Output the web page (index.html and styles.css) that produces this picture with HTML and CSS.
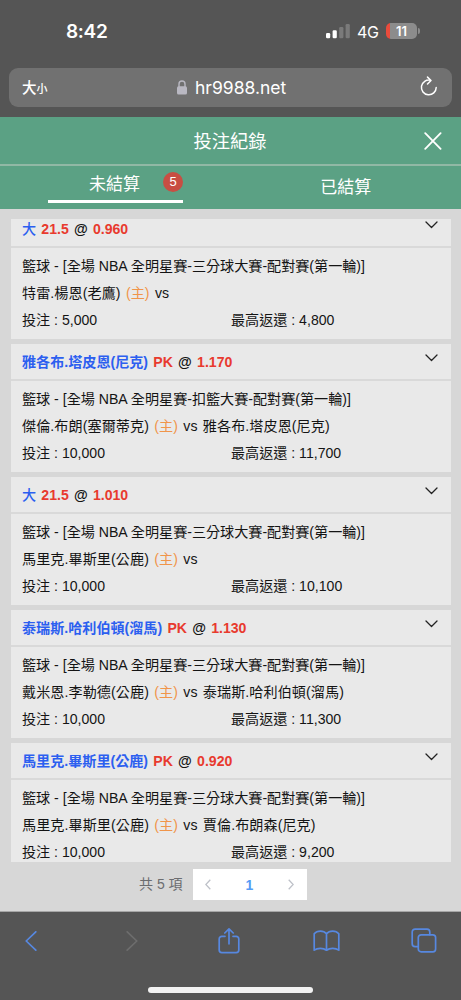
FILE: index.html
```html
<!DOCTYPE html>
<html lang="zh-Hant">
<head>
<meta charset="utf-8">
<title>投注紀錄</title>
<link rel="stylesheet" href="styles.css">
</head>
<body>
<div class="phone">
  <div class="status">
    <span class="time">8:42</span>
    <svg class="signal" width="24" height="16" viewBox="0 0 24 16"><rect x="0" y="10" width="4.2" height="5.3" rx="1.2" fill="#fff"/><rect x="6.6" y="7.3" width="4.2" height="8" rx="1.2" fill="#fff"/><rect x="13.2" y="4" width="4.2" height="11.3" rx="1.2" fill="#7a7a7a"/><rect x="19.6" y="1" width="4.2" height="14.3" rx="1.2" fill="#7a7a7a"/></svg>
    <span class="network">4G</span>
    <span class="battery">11</span><span class="battery-tip"></span>
  </div>
  <div class="address">
    <span class="text-size">大<small>小</small></span>
    <svg class="lock" width="10" height="15" viewBox="0 0 10 15"><path d="M2 7V4a3 3 0 0 1 6 0v3" fill="none" stroke="#b9b8c2" stroke-width="1.4"/><rect x="0" y="6.3" width="10" height="8.2" rx="1.6" fill="#b9b8c2"/></svg>
    <span class="host">hr9988.net</span>
    <svg class="reload" width="18" height="21" viewBox="0 0 18 21" fill="none" stroke="#fff" stroke-width="1.5" stroke-linecap="round" stroke-linejoin="round"><path d="M10.5 4.2A7.4 7.4 0 1 0 16.2 11.5M7.5 1.1L11 4.5 7.5 8"/></svg>
  </div>
  <header class="title">
    <span>投注紀錄</span>
    <svg class="close" width="18" height="18" viewBox="0 0 18 18" stroke="#fff" stroke-width="1.8" stroke-linecap="round"><path d="M1.2 1.2l15.4 15.6M16.6 1.2L1.2 16.8"/></svg>
  </header>
  <nav class="tabs">
    <div class="tab tab-active"><span>未結算</span><b class="count">5</b></div>
    <div class="tab"><span>已結算</span></div>
  </nav>
  <main class="list">
    <article class="card">
      <div class="pick"><div><span class="team light">大</span> <span class="odds">21.5</span> @ <span class="odds">0.960</span></div><svg class="chevron" width="13" height="8" viewBox="0 0 13 8"><path d="M1 1l5.5 5.5L12 1"/></svg></div>
      <div class="detail"><p>籃球 - [全場 NBA 全明星賽-三分球大賽-配對賽(第一輪)]</p><p class="match">特雷.楊恩(老鷹) <i>(主)</i> vs</p><p class="money"><span>投注 : 5,000</span><span>最高返還 : 4,800</span></p></div>
    </article>
    <article class="card">
      <div class="pick"><div><span class="team">雅各布.塔皮恩(尼克)</span> <span class="odds">PK</span> @ <span class="odds">1.170</span></div><svg class="chevron" width="13" height="8" viewBox="0 0 13 8"><path d="M1 1l5.5 5.5L12 1"/></svg></div>
      <div class="detail"><p>籃球 - [全場 NBA 全明星賽-扣籃大賽-配對賽(第一輪)]</p><p class="match">傑倫.布朗(塞爾蒂克) <i>(主)</i> vs 雅各布.塔皮恩(尼克)</p><p class="money"><span>投注 : 10,000</span><span>最高返還 : 11,700</span></p></div>
    </article>
    <article class="card">
      <div class="pick"><div><span class="team light">大</span> <span class="odds">21.5</span> @ <span class="odds">1.010</span></div><svg class="chevron" width="13" height="8" viewBox="0 0 13 8"><path d="M1 1l5.5 5.5L12 1"/></svg></div>
      <div class="detail"><p>籃球 - [全場 NBA 全明星賽-三分球大賽-配對賽(第一輪)]</p><p class="match">馬里克.畢斯里(公鹿) <i>(主)</i> vs</p><p class="money"><span>投注 : 10,000</span><span>最高返還 : 10,100</span></p></div>
    </article>
    <article class="card">
      <div class="pick"><div><span class="team">泰瑞斯.哈利伯頓(溜馬)</span> <span class="odds">PK</span> @ <span class="odds">1.130</span></div><svg class="chevron" width="13" height="8" viewBox="0 0 13 8"><path d="M1 1l5.5 5.5L12 1"/></svg></div>
      <div class="detail"><p>籃球 - [全場 NBA 全明星賽-三分球大賽-配對賽(第一輪)]</p><p class="match">戴米恩.李勒德(公鹿) <i>(主)</i> vs 泰瑞斯.哈利伯頓(溜馬)</p><p class="money"><span>投注 : 10,000</span><span>最高返還 : 11,300</span></p></div>
    </article>
    <article class="card">
      <div class="pick"><div><span class="team">馬里克.畢斯里(公鹿)</span> <span class="odds">PK</span> @ <span class="odds">0.920</span></div><svg class="chevron" width="13" height="8" viewBox="0 0 13 8"><path d="M1 1l5.5 5.5L12 1"/></svg></div>
      <div class="detail"><p>籃球 - [全場 NBA 全明星賽-三分球大賽-配對賽(第一輪)]</p><p class="match">馬里克.畢斯里(公鹿) <i>(主)</i> vs 賈倫.布朗森(尼克)</p><p class="money"><span>投注 : 10,000</span><span>最高返還 : 9,200</span></p></div>
    </article>
  </main>
  <div class="pager">
    <span class="total">共 5 項</span>
    <div class="pages">
      <svg width="6" height="11" viewBox="0 0 6 11"><path d="M5.3.8L.8 5.5l4.5 4.7"/></svg>
      <b>1</b>
      <svg width="6" height="11" viewBox="0 0 6 11"><path d="M.7.8l4.5 4.7L.7 10.2"/></svg>
    </div>
  </div>
  <footer class="toolbar">
    <div class="tools">
      <svg width="12" height="20" viewBox="0 0 12 20"><path d="M10.8.8L1.2 10l9.6 9.2"/></svg>
      <svg width="12" height="20" viewBox="0 0 12 20"><path d="M1.2.8l9.6 9.2-9.6 9.2"/></svg>
      <svg width="22" height="26" viewBox="0 0 22 26"><path d="M7 8.3H3.8a2.6 2.6 0 0 0-2.6 2.6v11.2a2.6 2.6 0 0 0 2.6 2.6h14.4a2.6 2.6 0 0 0 2.6-2.6V10.9a2.6 2.6 0 0 0-2.6-2.6H15M11 15.8V1M6.8 5L11 .9 15.2 5"/></svg>
      <svg width="27" height="22" viewBox="0 0 27 22"><path d="M13.5 3.8C10.5.2 4.2.2 1.2 3.8v16.4c3.2-2.5 9-2.5 12.3 0 3.3-2.5 9.1-2.5 12.3 0V3.8c-3-3.6-9.3-3.6-12.3 0zV20"/></svg>
      <svg width="26" height="25" viewBox="0 0 26 25"><rect x="7.3" y="6.8" width="17.3" height="17" rx="2.8"/><path d="M7.2 18.6H4.1a2.9 2.9 0 0 1-2.9-2.9V4a2.9 2.9 0 0 1 2.9-2.9H16A2.9 2.9 0 0 1 18.8 4v2.6"/></svg>
    </div>
    <div class="home"></div>
  </footer>
</div>
</body>
</html>
```

FILE: styles.css
```css
* { box-sizing: border-box; }
body { margin: 0; font-family: "Liberation Sans", "Noto Sans CJK TC", sans-serif; }
svg { display: block; flex: none; }
.phone { width: 461px; height: 1000px; overflow: hidden; display: flex; flex-direction: column; background: #555; }
.phone > * { flex: none; }

.status { height: 68px; padding: 0 41px 0 66px; display: flex; align-items: flex-start; font-family: Inter, sans-serif; color: #fff; }
.time { margin: 20px auto 0 0; font-size: 19px; line-height: 24px; font-weight: 600; letter-spacing: -.3px; }
.signal { margin: 23px 0 0; }
.network { margin: 22px 0 0 7px; width: 29px; font-size: 16px; line-height: 20px; letter-spacing: -.4px; }
.battery { margin-top: 23px; width: 31px; height: 16px; border-radius: 5px; background: linear-gradient(90deg, #e94b3c 4px, #8c8c8c 4px); font-size: 13px; line-height: 16px; font-weight: 600; text-align: center; }
.battery-tip { margin: 28px 0 0 1px; width: 2px; height: 6px; border-radius: 0 2px 2px 0; background: #8c8c8c; }

.address { height: 39px; margin: 0 9px 10px; padding: 0 14px 0 13px; border-radius: 9px; background: #717171; color: #fff; display: flex; align-items: center; }
.text-size { width: 155px; font: 500 14.5px/20px "Noto Sans CJK TC", sans-serif; }
.text-size small { font-size: 11px; }
.host { margin: 0 auto 0 8px; font: 17.5px/22px Inter, sans-serif; }
.reload { margin-top: -2px; }

.title { height: 49px; padding-right: 19px; display: grid; grid-template-columns: 1fr auto 1fr; align-items: center; background: #5ba184; border-bottom: 2px solid #91b8a5; color: #fff; font-size: 18.3px; line-height: 24px; }
.title span { grid-column: 2; margin: 2px 0 0 18px; }
.close { justify-self: end; }
.tabs { height: 43px; display: grid; grid-template-columns: 1fr 1fr; background: #5ba184; color: #fff; font-size: 17px; line-height: 24px; }
.tab { padding-top: 10px; text-align: center; }
.tab-active { width: 135px; height: 37px; margin-left: 48px; padding: 7px 0 0 41px; display: flex; align-items: flex-start; border-bottom: 3px solid #fff; }
.count { margin: -1px 0 0 auto; width: 20px; height: 20px; border-radius: 50%; background: #c84e43; font-size: 13px; line-height: 20px; font-weight: 400; text-align: center; }

.list { height: 653px; padding: 10px 10px 0 11px; background: #d7d7d7; overflow: hidden; font-size: 14.1px; }
.card { height: 128px; margin-bottom: 5px; background: #e9e9e9; color: #141414; }
.card:first-child { height: 120px; }
.pick { height: 37px; padding: 0 13px 0 11px; display: flex; white-space: nowrap; word-spacing: 1.3px; border-bottom: 2px solid #d9d9d9; line-height: 36px; font-weight: 700; }
.card:first-child .pick { height: 29px; line-height: 20px; }
.team { color: #2c5ff0; }
.light { font-weight: 500; }
.odds { color: #e83a2e; }
.chevron { margin: 10px 0 0 auto; fill: none; stroke: #222; stroke-width: 1.3; stroke-linecap: round; stroke-linejoin: round; }
.card:first-child .chevron { margin-top: 2px; }
.detail { padding: 5px 11px 0; }
.detail p { margin: 0; height: 27px; line-height: 27px; white-space: nowrap; }
.detail i { font-style: normal; color: #f0954a; }
.detail .match { word-spacing: 1.3px; letter-spacing: .08px; }
.detail .money { display: grid; grid-template-columns: 209px 1fr; }

.pager { height: 50px; padding: 7px 0 0 139px; display: flex; align-items: flex-start; background: #d7d7d7; border-bottom: 1px solid #a6a6a6; color: #6c6d70; font-size: 14px; line-height: 30px; }
.total { width: 54px; white-space: nowrap; }
.pages { width: 114px; height: 31px; padding: 0 13px 0 12px; display: flex; align-items: center; justify-content: space-between; background: #fff; }
.pages svg { fill: none; stroke: #bec1c8; stroke-width: 1.3; }
.pages b { color: #559cf5; font-size: 14px; }

.toolbar { flex: 1 !important; background: #555; }
.tools { height: 57px; padding: 0 24px 0 25px; display: flex; align-items: center; }
.tools svg { fill: none; stroke: #5788e0; stroke-width: 1.7; stroke-linecap: round; stroke-linejoin: round; }
.tools svg:nth-child(2) { margin-left: 89px; stroke: #6d6d6d; }
.tools svg:nth-child(3) { margin-left: 80px; }
.tools svg:nth-child(4) { margin-left: 73px; }
.tools svg:nth-child(5) { margin-left: auto; }
.home { width: 165px; height: 6px; margin: 18px 0 0 148px; border-radius: 3px; background: #f2f2f2; }
```
